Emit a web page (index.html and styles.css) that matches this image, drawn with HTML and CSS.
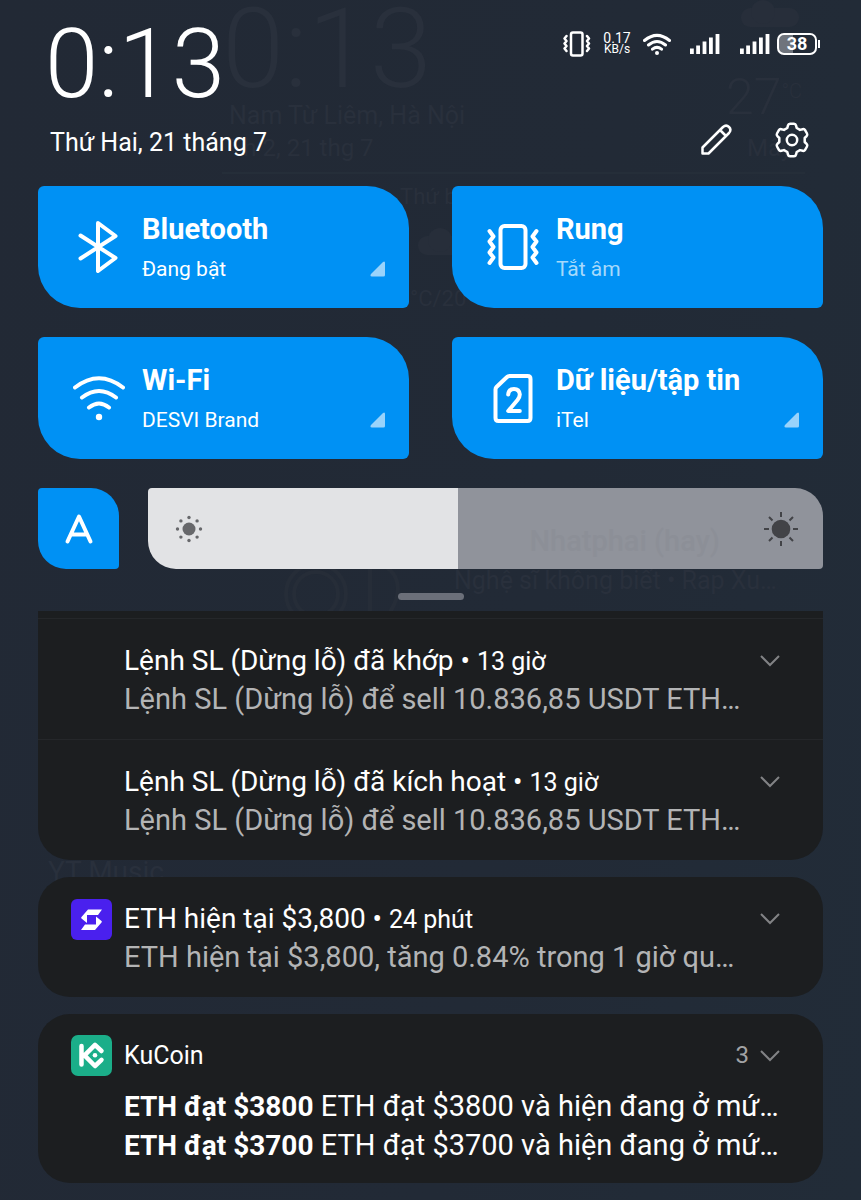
FILE: index.html
```html
<!DOCTYPE html>
<html lang="vi">
<head>
<meta charset="utf-8">
<meta name="viewport" content="width=device-width, initial-scale=1">
<title>Trung tâm thông báo</title>
<link rel="stylesheet" href="styles.css">
</head>
<body>
<div class="shade">
  <div class="wallpaper" aria-hidden="true">
    <span class="ghost ghost-clock">0:13</span>
    <span class="ghost ghost-place">Nam Từ Liêm, Hà Nội</span>
    <span class="ghost ghost-date">Th 2, 21 thg 7</span>
    <span class="ghost ghost-temp">27<small>°C</small></span>
    <span class="ghost ghost-sky">Mây</span>
    <span class="ghost ghost-day">Thứ ba</span>
    <span class="ghost ghost-range">°C/20</span>
    <span class="ghost ghost-artist">Nghệ sĩ không biết • Rap Xu…</span>
    <span class="ghost ghost-app">YT Music</span>
    <svg class="ghost-cloud cloud-top" viewBox="0 0 58 28"><rect y="8" width="58" height="19" rx="9"/><circle cx="22" cy="12" r="12"/></svg>
    <svg class="ghost-cloud cloud-mid" viewBox="0 0 58 28"><rect y="8" width="58" height="19" rx="9"/><circle cx="22" cy="12" r="12"/></svg>
    <svg class="ghost-disc" viewBox="0 0 160 90"><circle cx="68" cy="50" r="30"/><circle cx="68" cy="50" r="22"/><path d="M122 16v70M122 18c30 4 34 28 20 50"/></svg>
  </div>

  <header class="top">
    <div class="when">
      <time class="clock">0:13</time>
      <p class="date">Thứ Hai, 21 tháng 7</p>
    </div>
    <div class="side">
      <div class="status">
        <svg class="st-vibrate" viewBox="0 0 28 28" role="img" aria-label="Rung"><g class="line"><rect x="8" y="2.500" width="11.500" height="23" rx="2"/><path d="M3.500 6l-2 2.500 2 2.500-2 2.500 2 2.500-2 2.500 2 2.500M24 6l2 2.500-2 2.500 2 2.500-2 2.500 2 2.500-2 2.500"/></g></svg>
        <div class="speed"><span>0.17</span><span class="unit">KB/s</span></div>
        <svg class="st-wifi" viewBox="0 0 28 24" role="img" aria-label="Wi-Fi"><g class="arc"><path d="M1.500 8.500Q14-1.800 26.500 8.500M5.500 13Q14 6 22.500 13M9.500 17.200Q14 13.600 18.500 17.200"/></g><circle class="fill" cx="14" cy="21" r="2"/></svg>
        <svg class="st-signal" viewBox="0 0 31 22" role="img" aria-label="SIM 1"><path class="fill" d="M1 15.500h3.800V21H1zM7.200 12.500h3.800V21H7.200zM13.600 8.500h3.800V21h-3.800zM20 4.500h3.800V21H20zM26.600 1h3.800v20h-3.800z"/></svg>
        <svg class="st-signal" viewBox="0 0 31 22" role="img" aria-label="SIM 2"><path class="fill" d="M1 15.500h3.800V21H1zM7.200 12.500h3.800V21H7.200zM13.600 8.500h3.800V21h-3.800zM20 4.500h3.800V21H20zM26.600 1h3.800v20h-3.800z"/></svg>
        <div class="battery"><span>38</span></div>
      </div>
      <div class="actions">
        <button class="act" aria-label="Chỉnh sửa"><svg viewBox="0 0 36 36"><g class="line"><path d="M4.500 31.500v-6L25 5q3.200-2.800 6 0t0 6L10.500 31.500zM22 8l6 6"/></g></svg></button>
        <button class="act" aria-label="Cài đặt"><svg viewBox="0 0 36 36"><g class="line"><path d="M16 1.800h4q1.600 0 2 1.600l.7 2.600 3.300 1.900 2.700-.7q1.600-.4 2.400 1l1.900 3.300q.8 1.400-.4 2.600l-1.900 1.900v4l1.900 1.900q1.200 1.200.4 2.600l-1.900 3.300q-.8 1.400-2.400 1l-2.700-.7-3.300 1.900-.7 2.600q-.4 1.600-2 1.600h-4q-1.600 0-2-1.600l-.7-2.600-3.300-1.900-2.700.7q-1.600.4-2.400-1l-1.900-3.300q-.8-1.400.4-2.600l1.900-1.900v-4l-1.900-1.900q-1.200-1.200-.4-2.600l1.900-3.300q.8-1.400 2.400-1l2.700.7 3.300-1.900.7-2.600q.4-1.600 2-1.600z"/><circle cx="18" cy="18" r="5.200"/></g></svg></button>
      </div>
    </div>
  </header>

  <main>
    <section class="tiles" aria-label="Cài đặt nhanh">
      <button class="tile">
        <svg class="tile-icon" viewBox="0 0 52 52"><g class="line"><path d="M7.500 14.500L42.500 37 25 50V2L42.500 15 7.500 37.500"/></g></svg>
        <span class="tile-text"><b>Bluetooth</b><span>Đang bật</span></span>
        <svg class="corner" viewBox="0 0 16 16"><path d="M1 13L13 1q2-1.500 2 1v12q0 1.500-1.500 1.500H2q-2.500 0-1-2.500z"/></svg>
      </button>
      <button class="tile">
        <svg class="tile-icon" viewBox="0 0 52 52"><g class="line"><rect x="13.500" y="5" width="25" height="42" rx="4"/><path d="M2.500 10l4 5.500-4 5 4 5.500-4 5.500 4 5-4 5.500M49.500 10l-4 5.500 4 5-4 5.500 4 5.500-4 5 4 5.500"/></g></svg>
        <span class="tile-text"><b>Rung</b><span class="dim">Tắt âm</span></span>
      </button>
      <button class="tile">
        <svg class="tile-icon" viewBox="0 0 52 52"><g class="line"><path d="M2 15.500Q26 -3 50 15.500M9 25.500Q26 12.500 43 25.500M16 35.500Q26 27.500 36 35.500"/></g><circle class="fill" cx="26" cy="45" r="3.200"/></svg>
        <span class="tile-text"><b>Wi-Fi</b><span>DESVI Brand</span></span>
        <svg class="corner" viewBox="0 0 16 16"><path d="M1 13L13 1q2-1.500 2 1v12q0 1.500-1.500 1.500H2q-2.500 0-1-2.500z"/></svg>
      </button>
      <button class="tile">
        <svg class="tile-icon" viewBox="0 0 52 52"><g class="line"><path d="M22.500 4h18q3 0 3 3v39q0 3-3 3h-29q-3 0-3-3V17.500q0-1.500 1-2.500L20 5q1-1 2.500-1z"/><path d="M21.200 22.500q.5-5.500 5.800-5.500t5.800 5.500q0 2.500-2.300 5.500L21.200 39h11.600"/></g></svg>
        <span class="tile-text"><b>Dữ liệu/tập tin</b><span>iTel</span></span>
        <svg class="corner" viewBox="0 0 16 16"><path d="M1 13L13 1q2-1.500 2 1v12q0 1.500-1.500 1.500H2q-2.500 0-1-2.500z"/></svg>
      </button>
    </section>

    <section class="brightness" aria-label="Độ sáng">
      <button class="auto" aria-label="Tự động"><svg viewBox="0 0 30 32"><path d="M3.500 28.500L15 3.500l11.500 25M7.500 21.500h15"/></svg></button>
      <div class="slider">
        <input type="range" min="0" max="100" value="46" aria-label="Độ sáng màn hình">
        <span class="ghost ghost-song" aria-hidden="true">Nhatphai (hay)</span>
        <svg class="sun sun-low" viewBox="0 0 36 36" aria-hidden="true"><circle cx="18" cy="18" r="6.500"/><g><circle cx="18" cy="6.500" r="1.700"/><circle cx="18" cy="29.500" r="1.700"/><circle cx="6.500" cy="18" r="1.700"/><circle cx="29.500" cy="18" r="1.700"/><circle cx="9.900" cy="9.900" r="1.700"/><circle cx="26.100" cy="9.900" r="1.700"/><circle cx="9.900" cy="26.100" r="1.700"/><circle cx="26.100" cy="26.100" r="1.700"/></g></svg>
        <svg class="sun sun-high" viewBox="0 0 36 36" aria-hidden="true"><circle cx="18" cy="18" r="9.300"/><path d="M18 1v5M18 30v5M1 18h5M30 18h5M6 6l3.500 3.500M26.500 26.500L30 30M6 30l3.500-3.500M26.500 9.500L30 6"/></svg>
      </div>
    </section>

    <div class="handle"></div>

    <section class="feed" aria-label="Thông báo">
      <div class="card card-cut">
        <article class="note">
          <div class="note-body">
            <h2>Lệnh SL (Dừng lỗ) đã khớp • <small>13 giờ</small></h2>
            <p>Lệnh SL (Dừng lỗ) để sell 10.836,85 USDT ETH…</p>
          </div>
          <button class="more" aria-label="Mở rộng"><svg viewBox="0 0 24 16"><path d="M3 3l9 9 9-9"/></svg></button>
        </article>
        <article class="note">
          <div class="note-body">
            <h2>Lệnh SL (Dừng lỗ) đã kích hoạt • <small>13 giờ</small></h2>
            <p>Lệnh SL (Dừng lỗ) để sell 10.836,85 USDT ETH…</p>
          </div>
          <button class="more" aria-label="Mở rộng"><svg viewBox="0 0 24 16"><path d="M3 3l9 9 9-9"/></svg></button>
        </article>
      </div>

      <div class="card">
        <article class="note">
          <svg class="app app-s" viewBox="0 0 41 41" role="img" aria-label="S"><rect width="41" height="41" rx="6"/><path d="M17 10.500h14L27 16H16v8l-5.500-4.500q-.8-.7 0-1.500zM24 31H10l4-5.500h11v-8l5.500 4.500q.8.700 0 1.500z"/></svg>
          <div class="note-body">
            <h2>ETH hiện tại $3,800 • <small>24 phút</small></h2>
            <p>ETH hiện tại $3,800, tăng 0.84% trong 1 giờ qu…</p>
          </div>
          <button class="more" aria-label="Mở rộng"><svg viewBox="0 0 24 16"><path d="M3 3l9 9 9-9"/></svg></button>
        </article>
      </div>

      <div class="card group">
        <div class="group-head">
          <svg class="app app-k" viewBox="0 0 41 41" role="img" aria-label="KuCoin"><rect width="41" height="41" rx="7"/><path d="M10.500 11v18.500M30.500 16l-6.500-6.200L13.500 20.300 24 31l6.500-6.200"/><circle cx="24" cy="20.300" r="2.300"/></svg>
          <h2>KuCoin</h2>
          <span class="count">3</span>
          <button class="more" aria-label="Mở rộng"><svg viewBox="0 0 24 16"><path d="M3 3l9 9 9-9"/></svg></button>
        </div>
        <p><b>ETH đạt $3800</b> ETH đạt $3800 và hiện đang ở mứ…</p>
        <p><b>ETH đạt $3700</b> ETH đạt $3700 và hiện đang ở mứ…</p>
      </div>

      <div class="card next"></div>
    </section>
  </main>
</div>
</body>
</html>
```
FILE: styles.css
```css
* { box-sizing: border-box; }

body {
  margin: 0;
  background: #222a35;
  color: #fff;
  font-family: Roboto, "Noto Sans", sans-serif;
}

h2, p { margin: 0; font-weight: 400; }

button {
  margin: 0;
  padding: 0;
  border: 0;
  background: none;
  color: inherit;
  font: inherit;
  text-align: left;
}

svg { display: block; }

.line, .arc {
  fill: none;
  stroke: #fff;
  stroke-linecap: round;
  stroke-linejoin: round;
}
.fill { fill: #fff; }

.shade {
  position: relative;
  height: 100vh;
  overflow: hidden;
  padding: 20px 38px 0;
  background: linear-gradient(100deg, #222935 0%, #222a36 60%, #222c38 100%);
}

/* Home screen showing faintly through the shade */
.wallpaper { position: absolute; inset: 0; }
.wallpaper::after {
  content: "";
  position: absolute;
  left: 222px;
  right: 56px;
  top: 172px;
  height: 2px;
  background: #252e39;
}
.ghost {
  position: absolute;
  color: #29303c;
  white-space: nowrap;
  line-height: 1;
}
.ghost-clock { left: 222px; top: 0; font-size: 112px; font-weight: 300; line-height: 98px; }
.ghost-place { left: 229px; top: 103px; font-size: 25px; }
.ghost-date { left: 229px; top: 136px; font-size: 24px; }
.ghost-temp { left: 726px; top: 72px; font-size: 50px; font-weight: 300; }
.ghost-temp small { font-size: 20px; vertical-align: 16px; }
.ghost-sky { left: 747px; top: 136px; font-size: 24px; }
.ghost-day { left: 400px; top: 186px; font-size: 22px; }
.ghost-range { left: 410px; top: 288px; font-size: 22px; }
.ghost-artist { left: 454px; top: 568px; font-size: 25px; }
.ghost-app { left: 48px; top: 858px; font-size: 28px; }
.ghost-cloud { position: absolute; width: 58px; fill: #272e3a; }
.cloud-top { left: 741px; top: 0; }
.cloud-mid { left: 418px; top: 228px; }
.ghost-disc {
  position: absolute;
  left: 248px;
  top: 544px;
  width: 160px;
  fill: none;
  stroke: #262d38;
  stroke-width: 4;
}

.top {
  position: relative;
  display: flex;
  justify-content: space-between;
  padding-bottom: 27px;
}
.when { padding-left: 12px; }
.clock {
  display: block;
  margin-left: -5px;
  font-size: 96px;
  font-weight: 300;
  line-height: 88px;
}
.date {
  margin-top: 19px;
  font-size: 25px;
  line-height: 32px;
}
.side {
  display: flex;
  flex-direction: column;
  justify-content: space-between;
}
.status {
  display: flex;
  align-items: center;
  height: 48px;
}
.st-vibrate { width: 28px; margin-right: 11px; }
.st-vibrate .line { stroke-width: 2.5; }
.speed {
  display: flex;
  flex-direction: column;
  align-items: center;
  width: 30px;
  margin-right: 11px;
  font-size: 14px;
  line-height: 11px;
}
.unit { font-size: 12px; }
.st-wifi { width: 28px; margin-right: 18px; }
.arc { stroke-width: 3; }
.st-signal { width: 31px; margin-right: 19px; }
.st-signal + .st-signal { margin-right: 7px; }
.battery {
  position: relative;
  width: 40px;
  height: 22px;
  margin-right: 6px;
  border: 2px solid #fff;
  border-radius: 7px;
  background: linear-gradient(90deg, #6f747c 38%, transparent 38%);
  font-size: 18px;
  font-weight: 700;
  line-height: 18px;
  text-align: center;
}
.battery::after {
  content: "";
  position: absolute;
  right: -5px;
  top: 5px;
  width: 2px;
  height: 8px;
  background: #fff;
}
.actions {
  display: flex;
  justify-content: flex-end;
  gap: 40px;
  padding: 0 13px 1px 0;
}
.act { width: 36px; height: 36px; }
.act .line { stroke-width: 2.5; }

.tiles {
  position: relative;
  display: grid;
  grid-template-columns: 1fr 1fr;
  gap: 29px 43px;
}
.tile {
  position: relative;
  display: flex;
  align-items: center;
  gap: 17px;
  height: 122px;
  padding-left: 35px;
  border-radius: 6px 42px 6px 42px;
  background: #0091f4;
}
.tile-icon { flex: none; width: 52px; }
.tile-icon .line { stroke-width: 4; }
.tile-text {
  display: flex;
  flex-direction: column;
  gap: 8px;
  font-size: 21px;
  line-height: 28px;
}
.tile-text b { font-size: 29px; line-height: 36px; }
.dim { color: #a6d9fb; }
.corner {
  position: absolute;
  right: 23px;
  bottom: 31px;
  width: 16px;
  fill: #99d3fb;
}

.brightness {
  position: relative;
  display: flex;
  gap: 29px;
  margin-top: 29px;
}
.auto {
  display: grid;
  place-items: center;
  width: 81px;
  height: 81px;
  border-radius: 4px 28px 4px 28px;
  background: #0091f4;
}
.auto svg { width: 30px; }
.auto path {
  fill: none;
  stroke: #fff;
  stroke-width: 4;
  stroke-linecap: round;
  stroke-linejoin: round;
}
.slider { position: relative; flex: 1; height: 81px; }
.slider input {
  appearance: none;
  display: block;
  width: 100%;
  height: 100%;
  margin: 0;
  border-radius: 4px 28px 4px 28px;
  background: linear-gradient(90deg, #e2e3e5 46%, #90939b 46%);
}
.slider input::-webkit-slider-thumb {
  appearance: none;
  width: 1px;
  height: 81px;
  background: transparent;
}
.ghost-song {
  right: 103px;
  top: 39px;
  font-size: 29px;
  font-weight: 500;
  color: #8c8f97;
  pointer-events: none;
}
.sun {
  position: absolute;
  top: 23px;
  width: 36px;
  pointer-events: none;
}
.sun-low { left: 23px; fill: #67686b; }
.sun-high { right: 24px; fill: #424347; stroke: #424347; }
.sun-high circle { stroke: none; }
.sun-high path { stroke-width: 2; }

.handle {
  position: relative;
  width: 66px;
  height: 7px;
  margin: 24px auto 11px;
  border-radius: 4px;
  background: #6b6f79;
}

.feed {
  position: relative;
  display: flex;
  flex-direction: column;
  gap: 17px;
}
.card {
  border-radius: 32px;
  background: #1c1e20;
  font-size: 28px;
  line-height: 39px;
}
.card-cut {
  padding-top: 7px;
  border-radius: 0 0 32px 32px;
}
.card-cut .note { border-top: 1px solid #25272a; }
.note {
  display: flex;
  gap: 12px;
  padding: 22px 40px 20px 33px;
}
.card-cut .note { padding-left: 86px; }
.note-body { flex: 1; min-width: 0; }
.note-body h2, .note-body p, .group p {
  overflow: hidden;
  height: 39px;
  text-overflow: ellipsis;
  white-space: nowrap;
}
.note-body h2 { font-size: 28px; }
.note-body small { font-size: 25px; }
.note-body p { font-size: 29px; color: #b3b4b5; }
.app { flex: none; width: 41px; height: 41px; }
.more {
  flex: none;
  display: grid;
  place-items: center;
  width: 26px;
  height: 39px;
}
.more svg { width: 24px; fill: none; stroke: #828385; stroke-width: 2; }
.app-s rect { fill: #4a20ee; }
.app-s path { fill: #fff; }
.app-k rect { fill: #1bae89; }
.app-k path {
  fill: none;
  stroke: #fff;
  stroke-width: 4.500;
  stroke-linecap: round;
  stroke-linejoin: round;
}
.app-k circle { fill: #fff; }
.group { padding: 21px 40px 18px 33px; }
.group-head {
  display: flex;
  align-items: center;
  gap: 12px;
  margin-bottom: 11px;
}
.group-head h2 { flex: 1; font-size: 25px; }
.count { margin-right: -4px; font-size: 24px; color: #a2a3a5; }
.group p { padding-left: 53px; font-size: 29px; }
.group b { font-size: 28px; }
.next { height: 120px; }
```
